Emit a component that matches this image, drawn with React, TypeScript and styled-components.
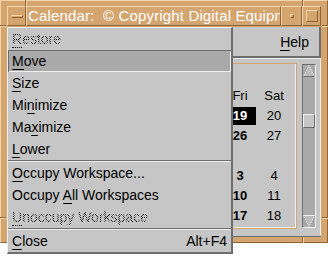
import styled, { createGlobalStyle } from 'styled-components';

const TAN = '#d5a56f';
const TAN_LIGHT = '#f5d4a8';
const TAN_DARK = '#8f6538';
const GRAY = '#c6c6c6';
const GRAY_LIGHT = '#efefef';
const GRAY_DARK = '#6e6e6e';
const TROUGH = '#a9a9a9';
const FONT = '"Liberation Sans", Arial, Helvetica, sans-serif';

const GlobalStyle = createGlobalStyle`
    body {
        margin: 0;
        background: #ffffff;
        font-family: ${FONT};
    }
`;

const Desktop = styled.div`
    position: relative;
    width: 328px;
    height: 256px;
    overflow: hidden;
    background: #ffffff;
`;

const Frame = styled.div`
    position: relative;
    box-sizing: border-box;
    width: 328px;
    height: 243px;
    display: flex;
    flex-direction: column;
    gap: 1px;
    padding: 5px 6px 5px 6px;
    background: ${TAN};
    border: 1px solid;
    border-color: ${TAN_LIGHT} ${TAN_DARK} ${TAN_DARK} ${TAN_LIGHT};
`;

// resize-handle cuts in the frame border, 25px from each corner
const Notch = styled.span<{ $v?: boolean }>`
    position: absolute;
    width: ${(p) => (p.$v ? '1px' : '6px')};
    height: ${(p) => (p.$v ? '6px' : '1px')};
    background: ${TAN_DARK};
    box-shadow: ${(p) => (p.$v ? '1px 0 0' : '0 1px 0')} ${TAN_LIGHT};
`;

const TitleBar = styled.div`
    display: flex;
    height: 20px;
`;

const TitleButton = styled.div<{ $w: number }>`
    box-sizing: border-box;
    width: ${(p) => p.$w}px;
    display: flex;
    align-items: center;
    justify-content: center;
    border: 1px solid;
    border-color: ${TAN_LIGHT} ${TAN_DARK} ${TAN_DARK} ${TAN_LIGHT};
`;

const MenuBarGlyph = styled.span`
    box-sizing: border-box;
    width: 12px;
    height: 3px;
    margin-top: 1px;
    border: 1px solid;
    border-color: ${TAN_LIGHT} ${TAN_DARK} ${TAN_DARK} ${TAN_LIGHT};
`;

const SquareGlyph = styled.span<{ $size: number }>`
    box-sizing: border-box;
    width: ${(p) => p.$size}px;
    height: ${(p) => p.$size}px;
    border: 1px solid;
    border-color: ${TAN_LIGHT} ${TAN_DARK} ${TAN_DARK} ${TAN_LIGHT};
`;

const TitleText = styled.div`
    box-sizing: border-box;
    flex: 1;
    min-width: 0;
    overflow: hidden;
    white-space: pre;
    padding-left: 1px;
    color: #ffffff;
    font-size: 15px;
    line-height: 18px;
    letter-spacing: 0.15px;
    border: 1px solid;
    border-color: ${TAN_LIGHT} ${TAN_DARK} ${TAN_DARK} ${TAN_LIGHT};
`;

const Client = styled.div`
    flex: 1;
    display: flex;
    flex-direction: column;
    background: ${GRAY};
    border-bottom: 1px solid ${GRAY_DARK};
`;

const MenuBar = styled.div`
    box-sizing: border-box;
    height: 31px;
    display: flex;
    justify-content: flex-end;
    align-items: center;
    padding-right: 10px;
    font-size: 14px;
    border-bottom: 2px solid ${GRAY_DARK};
    border-right: 2px solid ${GRAY_DARK};
`;

const Work = styled.div`
    flex: 1;
    display: flex;
    gap: 5px;
    padding: 4px 4px 7px 4px;
    border-top: 1px solid ${GRAY_LIGHT};
    border-right: 1px solid ${GRAY_LIGHT};
`;

const CalendarBox = styled.div`
    flex: 1;
    display: flex;
    justify-content: flex-end;
    align-items: flex-start;
    padding: 22px 5px 0 0;
    border: 1px solid ${TAN};
    box-shadow: inset -1px -1px 0 ${GRAY_LIGHT};
`;

const Grid = styled.div`
    display: grid;
    grid-template-columns: repeat(7, 34px);
    grid-auto-rows: 20px;
    font-size: 13px;
    line-height: 20px;
    text-align: center;
    color: #000000;
`;

const Cell = styled.div<{ $bold?: boolean; $selected?: boolean }>`
    font-weight: ${(p) => (p.$bold || p.$selected ? 700 : 400)};
    ${(p) =>
        p.$selected &&
        `
        margin: 1px 1px;
        line-height: 18px;
        background: #000000;
        color: #ffffff;
    `}
`;

const ScrollBar = styled.div`
    box-sizing: border-box;
    width: 14px;
    margin: 1px 0;
    display: flex;
    flex-direction: column;
    background: ${TROUGH};
    border: 1px solid;
    border-color: ${GRAY_DARK} ${GRAY_LIGHT} ${GRAY_LIGHT} ${GRAY_DARK};
`;

const Track = styled.div`
    flex: 1;
`;

const Thumb = styled.div<{ $offset: number }>`
    box-sizing: border-box;
    height: 14px;
    margin-top: ${(p) => p.$offset}px;
    background: ${GRAY};
    border: 1px solid;
    border-color: ${GRAY_LIGHT} ${GRAY_DARK} ${GRAY_DARK} ${GRAY_LIGHT};
`;

const WindowMenu = styled.div`
    position: absolute;
    left: 7px;
    top: 27px;
    box-sizing: border-box;
    width: 226px;
    height: 227px;
    background: ${GRAY};
    border: 1px solid;
    border-width: 1px 2px 2px 1px;
    border-color: ${GRAY_LIGHT} ${GRAY_DARK} ${GRAY_DARK} ${GRAY_LIGHT};
    font-size: 14px;
    color: #000000;
`;

const Item = styled.div<{ $active?: boolean }>`
    height: 22px;
    display: flex;
    justify-content: space-between;
    padding: 0 4px;
    line-height: 22px;
    white-space: pre;
    ${(p) =>
        p.$active &&
        `
        background: ${TROUGH};
        box-shadow: inset 1px 1px 0 ${GRAY_DARK}, inset -1px -1px 0 ${GRAY_LIGHT};
    `}
`;

const Label = styled.span<{ $disabled?: boolean }>`
    ${(p) =>
        p.$disabled &&
        `
        color: transparent;
        background: repeating-conic-gradient(#000 0 25%, transparent 0 50%) 0 0 / 2px 2px;
        -webkit-background-clip: text;
        background-clip: text;
    `}
`;

const Key = styled.span<{ $disabled?: boolean }>`
    border-bottom: 1px ${(p) => (p.$disabled ? 'dotted' : 'solid')} #000000;
`;

const Separator = styled.div`
    height: 1px;
    background: ${GRAY_DARK};
    border-bottom: 1px solid ${GRAY_LIGHT};
`;

const Arrow = ({ down }: { down?: boolean }) => (
    <svg width="12" height="12" viewBox="0 0 12 12" style={{ display: 'block' }}>
        {down ? (
            <>
                <polygon points="0.5,0.5 11.5,0.5 6,11.5" fill="#bdbdbd" />
                <polyline points="0.5,0.5 11.5,0.5" fill="none" stroke={GRAY_LIGHT} />
                <polyline points="0.5,0.5 6,11.5 11.5,0.5" fill="none" stroke={GRAY_LIGHT} strokeDasharray="1 1" />
            </>
        ) : (
            <>
                <polygon points="6,0.5 11.5,11.5 0.5,11.5" fill="#bdbdbd" />
                <polyline points="0.5,11.5 6,0.5 11.5,11.5" fill="none" stroke={GRAY_LIGHT} strokeDasharray="1 1" />
                <polyline points="0.5,11.5 11.5,11.5" fill="none" stroke={GRAY_DARK} />
            </>
        )}
    </svg>
);

type MenuEntry =
    | { sep: true }
    | { sep?: false; pre: string; key: string; post: string; accel?: string; active?: boolean; disabled?: boolean };

const MENU: MenuEntry[] = [
    { pre: '', key: 'R', post: 'estore', disabled: true },
    { pre: '', key: 'M', post: 'ove', active: true },
    { pre: '', key: 'S', post: 'ize' },
    { pre: 'Mi', key: 'n', post: 'imize' },
    { pre: 'Ma', key: 'x', post: 'imize' },
    { pre: '', key: 'L', post: 'ower' },
    { sep: true },
    { pre: '', key: 'O', post: 'ccupy Workspace...' },
    { pre: 'Occupy ', key: 'A', post: 'll Workspaces' },
    { pre: '', key: 'U', post: 'noccupy Workspace', disabled: true },
    { sep: true },
    { pre: '', key: 'C', post: 'lose', accel: 'Alt+F4' },
];

// only Fri and Sat are visible past the open window menu
const DAYS = ['', '', '', '', '', 'Fri', 'Sat'];
const WEEKS = [
    ['', '', '', '', '', '19', '20'],
    ['', '', '', '', '', '26', '27'],
    ['', '', '', '', '', '', ''],
    ['', '', '', '', '', '3', '4'],
    ['', '', '', '', '', '10', '11'],
    ['', '', '', '', '', '17', '18'],
];

const NOTCHES: { $v?: boolean; style: React.CSSProperties }[] = [
    { $v: true, style: { left: 24, top: -1 } },
    { $v: true, style: { left: 301, top: -1 } },
    { $v: true, style: { left: 24, bottom: -1 } },
    { $v: true, style: { left: 301, bottom: -1 } },
    { style: { left: -1, top: 24 } },
    { style: { right: -1, top: 24 } },
    { style: { left: -1, bottom: 24 } },
    { style: { right: -1, bottom: 24 } },
];

const App = () => {
    return (
        <Desktop>
            <GlobalStyle />
            <Frame>
                {NOTCHES.map((n, i) => (
                    <Notch key={i} $v={n.$v} style={n.style} />
                ))}
                <TitleBar>
                    <TitleButton $w={19}>
                        <MenuBarGlyph />
                    </TitleButton>
                    <TitleText>Calendar:  © Copyright Digital Equipment Corporation</TitleText>
                    <TitleButton $w={21}>
                        <SquareGlyph $size={4} />
                    </TitleButton>
                    <TitleButton $w={19}>
                        <SquareGlyph $size={12} />
                    </TitleButton>
                </TitleBar>
                <Client>
                    <MenuBar>
                        <span>
                            <Key>H</Key>elp
                        </span>
                    </MenuBar>
                    <Work>
                        <CalendarBox>
                            <Grid>
                                {DAYS.map((d, i) => (
                                    <Cell key={`d${i}`}>{d}</Cell>
                                ))}
                                {WEEKS.map((week, w) =>
                                    week.map((n, i) => (
                                        <Cell key={`${w}-${i}`} $bold={i === 5} $selected={w === 0 && i === 5}>
                                            {n}
                                        </Cell>
                                    )),
                                )}
                            </Grid>
                        </CalendarBox>
                        <ScrollBar>
                            <Arrow />
                            <Track>
                                <Thumb $offset={37} />
                            </Track>
                            <Arrow down />
                        </ScrollBar>
                    </Work>
                </Client>
            </Frame>
            <WindowMenu>
                {MENU.map((m, i) =>
                    m.sep ? (
                        <Separator key={i} />
                    ) : (
                        <Item key={i} $active={m.active}>
                            <Label $disabled={m.disabled}>
                                {m.pre}
                                <Key $disabled={m.disabled}>{m.key}</Key>
                                {m.post}
                            </Label>
                            {m.accel && <span>{m.accel}</span>}
                        </Item>
                    ),
                )}
            </WindowMenu>
        </Desktop>
    );
};

export default App;
